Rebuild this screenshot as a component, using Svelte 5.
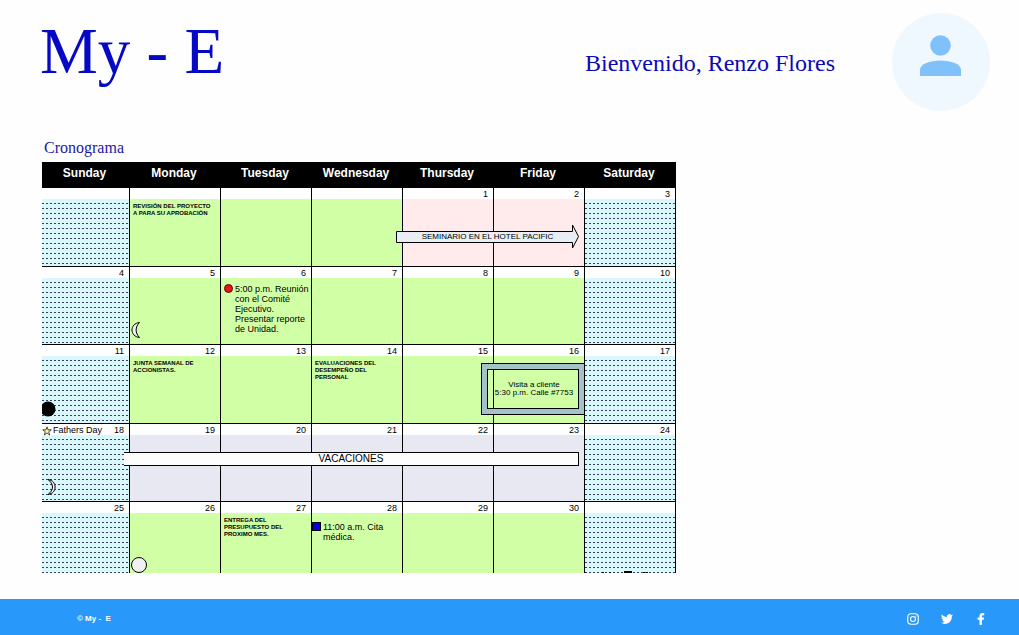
<script>
  const days = ['Sunday', 'Monday', 'Tuesday', 'Wednesday', 'Thursday', 'Friday', 'Saturday'];

  const weeks = [
    [
      { kind: 'weekend' },
      { kind: 'work', note: ['REVISIÓN DEL PROYECTO', 'A PARA SU APROBACIÓN'] },
      { kind: 'work' },
      { kind: 'work' },
      { kind: 'seminar', date: 1, overlay: 'seminar' },
      { kind: 'seminar', date: 2 },
      { kind: 'weekend', date: 3 }
    ],
    [
      { kind: 'weekend', date: 4 },
      { kind: 'work', date: 5, moon: 'last' },
      {
        kind: 'work',
        date: 6,
        marker: 'dot',
        event: ['5:00 p.m. Reunión', 'con el Comité', 'Ejecutivo.', 'Presentar reporte', 'de Unidad.']
      },
      { kind: 'work', date: 7 },
      { kind: 'work', date: 8 },
      { kind: 'work', date: 9 },
      { kind: 'weekend', date: 10 }
    ],
    [
      { kind: 'weekend', date: 11, moon: 'new' },
      { kind: 'work', date: 12, note: ['JUNTA SEMANAL DE', 'ACCIONISTAS.'] },
      { kind: 'work', date: 13 },
      { kind: 'work', date: 14, note: ['EVALUACIONES DEL', 'DESEMPEÑO DEL', 'PERSONAL'] },
      { kind: 'work', date: 15 },
      { kind: 'work', date: 16, overlay: 'visit' },
      { kind: 'weekend', date: 17 }
    ],
    [
      { kind: 'weekend', date: 18, holiday: 'Fathers Day', moon: 'waxing' },
      { kind: 'vacation', date: 19, overlay: 'vacation' },
      { kind: 'vacation', date: 20 },
      { kind: 'vacation', date: 21 },
      { kind: 'vacation', date: 22 },
      { kind: 'vacation', date: 23 },
      { kind: 'weekend', date: 24 }
    ],
    [
      { kind: 'weekend', date: 25 },
      { kind: 'work', date: 26, moon: 'full' },
      { kind: 'work', date: 27, note: ['ENTREGA DEL', 'PRESUPUESTO DEL', 'PROXIMO MES.'] },
      { kind: 'work', date: 28, marker: 'square', event: ['11:00 a.m. Cita', 'médica.'] },
      { kind: 'work', date: 29 },
      { kind: 'work', date: 30 },
      { kind: 'weekend', overlay: 'next' }
    ]
  ];
</script>

<div class="page">
  <header class="top">
    <h1>My - E</h1>
    <p class="welcome">Bienvenido, Renzo Flores</p>
    <div class="avatar">
      <svg viewBox="0 0 98 98" role="img" aria-label="Renzo Flores">
        <circle cx="48.500" cy="32.500" r="10.300" />
        <path d="M28 63V57C28 51 38 47.500 48.500 47.500S69 51 69 57V63Z" />
      </svg>
    </div>
  </header>

  <main>
    <h2>Cronograma</h2>
    <table>
      <colgroup>
        <col class="first-day" />
        {#each days.slice(1) as day (day)}<col />{/each}
      </colgroup>
      <thead>
        <tr>
          {#each days as day (day)}<th scope="col">{day}</th>{/each}
        </tr>
      </thead>
      <tbody>
        {#each weeks as week}
          <tr>
            {#each week as cell}
              <td class={cell.kind}>
                <div class="strip">
                  {#if cell.holiday}
                    <span class="holiday">
                      <svg width="10" height="10" viewBox="0 0 10 10" aria-hidden="true">
                        <path d="M5 .8 6 3.800H9.300L6.700 5.700 7.700 9 5 7 2.300 9 3.300 5.700.7 3.800H4Z" fill="#fff799" stroke="#222" stroke-width=".8" />
                      </svg>{cell.holiday}
                    </span>
                  {/if}
                  <span class="date">{cell.date ?? ''}</span>
                </div>

                {#if cell.note}
                  <p class="note">{#each cell.note as line}<span>{line}</span>{/each}</p>
                {/if}

                {#if cell.event}
                  <div class="event {cell.marker}">
                    <i></i>
                    <p>{#each cell.event as line}<span>{line}</span>{/each}</p>
                  </div>
                {/if}

                {#if cell.moon}
                  <svg class="moon {cell.moon}" width="18" height="18" viewBox="0 0 18 18" aria-hidden="true">
                    {#if cell.moon === 'full'}
                      <circle cx="9" cy="9" r="7.500" fill="#f1f1f1" stroke="#000" />
                    {:else if cell.moon === 'new'}
                      <circle cx="6" cy="9" r="7.500" fill="#000" />
                    {:else if cell.moon === 'last'}
                      <path d="M9.500 1.500C-.5 2.500-.5 15.500 9.500 16.500C5 12 5 6 9.500 1.500Z" fill="#f1f1f1" stroke="#000" />
                    {:else}
                      <path d="M6 1.500C15.500 2.500 15.500 15.500 6 16.500C12 12 12 6 6 1.500Z" fill="#f1f1f1" stroke="#000" />
                    {/if}
                  </svg>
                {/if}

                {#if cell.overlay === 'seminar'}
                  <div class="seminar-arrow">
                    <svg viewBox="0 0 183 25" preserveAspectRatio="none" aria-hidden="true">
                      <path d="M.5 7.500H176.500V1L182.500 12.500 176.500 24V18.500H.5Z" fill="#e8eef3" stroke="#000" />
                    </svg>
                    <span>SEMINARIO EN EL HOTEL PACIFIC</span>
                  </div>
                {:else if cell.overlay === 'visit'}
                  <div class="visit">
                    <p><span>Visita a cliente</span><span>5:30 p.m. Calle #7753</span></p>
                  </div>
                {:else if cell.overlay === 'vacation'}
                  <div class="vacation-bar">VACACIONES</div>
                {:else if cell.overlay === 'next'}
                  <svg class="next" width="50" height="2" viewBox="0 0 50 2" aria-hidden="true">
                    <path d="M2 1h2v1h-2ZM9 1h2v1h-2ZM24 0h8v2h-8ZM43 1h2v1h-2ZM46 1h2v1h-2Z" />
                  </svg>
                {/if}
              </td>
            {/each}
          </tr>
        {/each}
      </tbody>
    </table>
  </main>

  <footer>
    <span class="brand">© My -&nbsp; E</span>
    <nav aria-label="Redes sociales">
      <a href="#instagram" aria-label="Instagram">
        <svg width="12" height="12" viewBox="0 0 24 24" fill="none" stroke="#fff" stroke-width="2.200">
          <rect x="1.500" y="1.500" width="21" height="21" rx="6" />
          <circle cx="12" cy="12" r="5" />
          <circle cx="18" cy="6" r="1.200" fill="#fff" stroke="none" />
        </svg>
      </a>
      <a href="#twitter" aria-label="Twitter">
        <svg width="12" height="12" viewBox="0 0 24 24" fill="#fff">
          <path d="M23.950 4.570a10 10 0 0 1-2.820.77 4.960 4.960 0 0 0 2.160-2.720c-.95.550-2 .95-3.130 1.180a4.920 4.920 0 0 0-8.380 4.480C7.690 8.100 4.070 6.130 1.640 3.160a4.920 4.920 0 0 0 1.520 6.570 4.900 4.900 0 0 1-2.230-.61v.06a4.920 4.920 0 0 0 3.950 4.830 5 5 0 0 1-2.210.08 4.940 4.940 0 0 0 4.600 3.420A9.870 9.870 0 0 1 0 19.540a14 14 0 0 0 7.550 2.210c9.050 0 14-7.500 14-13.980l-.02-.63a10 10 0 0 0 2.420-2.570Z" />
        </svg>
      </a>
      <a href="#facebook" aria-label="Facebook">
        <svg width="12" height="12" viewBox="0 0 24 24" fill="#fff">
          <path d="M9 24V13.500H5V9h4V6.200C9 2.200 11.300 0 15 0c1.800 0 3.500.3 3.500.3v4h-2c-2 0-2.600 1.200-2.600 2.500V9h4.400l-.7 4.500h-3.700V24Z" />
        </svg>
      </a>
    </nav>
  </footer>
</div>

<style>
  :global(body) {
    background: #fefefe;
  }

  .page {
    display: flex;
    flex-direction: column;
    min-height: 100vh;
    color: #000;
    font-family: 'Liberation Sans', Arial, sans-serif;
  }

  h1,
  h2,
  p {
    margin: 0;
    font-weight: 400;
  }

  p span {
    display: block;
  }

  .top {
    display: flex;
    align-items: center;
    padding: 13px 29px 0 40px;
    color: #0b09b5;
    font-family: 'Liberation Serif', 'Times New Roman', serif;
  }

  h1 {
    align-self: flex-start;
    font-size: 65px;
    line-height: 76px;
    color: #0508c4;
  }

  .welcome {
    margin-left: auto;
    margin-right: 57px;
    padding-top: 2px;
    font-size: 24px;
    line-height: 28px;
  }

  .avatar {
    width: 98px;
    height: 98px;
    border-radius: 50%;
    background: #f0f8ff;
  }

  .avatar svg {
    display: block;
    fill: #80c1fc;
  }

  main {
    flex: 1;
    padding: 23px 42px 25px;
  }

  h2 {
    padding-left: 2px;
    font-family: 'Liberation Serif', 'Times New Roman', serif;
    font-size: 16px;
    line-height: 28px;
    color: #1a18a8;
  }

  table {
    width: 100%;
    max-width: 634px;
    table-layout: fixed;
    border-collapse: separate;
    border-spacing: 0;
  }

  .first-day {
    width: 88px;
  }

  th {
    height: 26px;
    padding: 0 3px 4px 0;
    box-sizing: border-box;
    background: #000;
    color: #fff;
    font-size: 12px;
    line-height: 16px;
  }

  td {
    position: relative;
    box-sizing: border-box;
    height: 78px;
    padding: 0;
    vertical-align: top;
    border-right: 1px solid #000;
    border-bottom: 1px solid #000;
  }

  tbody tr:nth-child(odd) td {
    height: 79px;
  }

  tbody tr:last-child td {
    height: 71px;
    border-bottom: 0;
  }

  .work {
    background: #d0ffa5;
  }

  .seminar {
    background: #ffebeb;
  }

  .vacation {
    background: #e8e8f3;
  }

  .weekend {
    background:
      repeating-linear-gradient(to bottom, transparent 0 1px, #d9f8fc 1px 5px),
      repeating-linear-gradient(to right, #3c3c5c 0 2px, #d9f8fc 2px 4px);
  }

  .strip {
    display: flex;
    height: 11px;
    padding-right: 5px;
    background: #fff;
    font-size: 9px;
    line-height: 13px;
  }

  .date {
    margin-left: auto;
  }

  .holiday {
    display: flex;
    align-items: center;
    gap: 1px;
    padding-top: 2px;
    white-space: nowrap;
  }

  .note {
    padding: 4px 0 0 3px;
    font-size: 6px;
    line-height: 7px;
    font-weight: 700;
    white-space: nowrap;
  }

  .event {
    display: flex;
    gap: 2px;
    padding-top: 6px;
    font-size: 9px;
    line-height: 10px;
    white-space: nowrap;
  }

  .event i {
    box-sizing: border-box;
    width: 9px;
    height: 9px;
    border: 1px solid #000;
  }

  .dot {
    padding-left: 3px;
  }

  .dot i {
    border-radius: 50%;
    border-color: #600;
    background: #e6141b;
  }

  .square {
    padding-top: 9px;
  }

  .square i {
    background: #0000e0;
  }

  .moon {
    position: absolute;
    left: 0;
    bottom: 5px;
  }

  .moon.full {
    bottom: -1px;
  }

  .seminar-arrow {
    position: absolute;
    z-index: 1;
    left: -7px;
    top: 36px;
    width: calc(200% + 3px);
    height: 25px;
    font-size: 8px;
    line-height: 25px;
    text-align: center;
    white-space: nowrap;
  }

  .seminar-arrow svg {
    position: absolute;
    inset: 0;
    width: 100%;
    height: 100%;
  }

  .seminar-arrow span {
    position: relative;
  }

  .visit {
    position: absolute;
    z-index: 1;
    left: -13px;
    right: 0;
    top: 18px;
    box-sizing: border-box;
    height: 52px;
    padding: 5px;
    border: 1px solid #000;
    border-right: 0;
    box-shadow: inset 0 0 0 5px #a3c3c9;
    font-size: 8px;
    line-height: 8px;
    text-align: center;
    white-space: nowrap;
  }

  .visit p {
    box-sizing: border-box;
    height: 40px;
    padding: 11px 0 0 2px;
    border: 1px solid #000;
  }

  .vacation-bar {
    position: absolute;
    z-index: 1;
    left: -6px;
    top: 28px;
    box-sizing: border-box;
    width: calc(500% + 5px);
    height: 14px;
    border: 1px solid #000;
    border-left: 0;
    background: #fdfdfd;
    font-size: 10px;
    line-height: 12px;
    text-align: center;
  }

  .next {
    position: absolute;
    left: 15px;
    bottom: 0;
  }

  footer {
    display: flex;
    align-items: center;
    justify-content: space-between;
    height: 36px;
    padding: 0 32px 0 77px;
    box-sizing: border-box;
    background: #2998fb;
    color: #fff;
  }

  .brand {
    padding-top: 4px;
    font-size: 8px;
    line-height: 12px;
    font-weight: 700;
  }

  nav {
    display: flex;
    gap: 22px;
    padding-top: 4px;
  }

  nav a,
  nav svg {
    display: block;
  }
</style>
